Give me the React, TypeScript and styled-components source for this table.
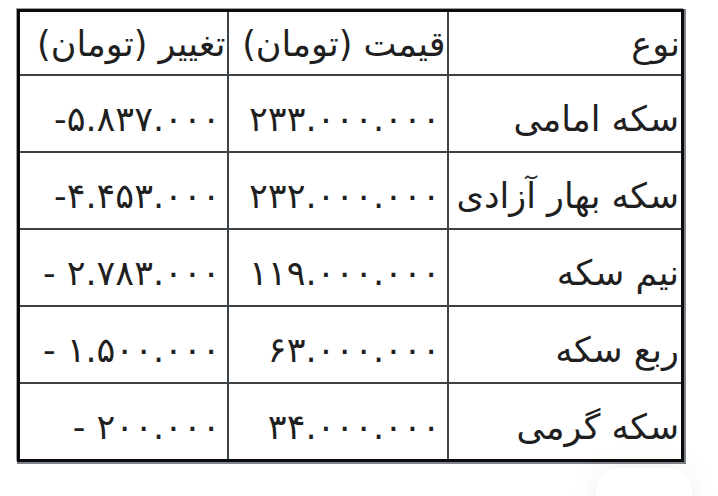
import styled, { createGlobalStyle } from 'styled-components';

const GlobalStyle = createGlobalStyle`
  html, body {
    margin: 0;
    padding: 0;
    background: #ffffff;
  }
  body {
    font-family: "DejaVu Sans", "Noto Sans", sans-serif;
    color: #1f1f1f;
  }
`;

const Page = styled.div`
  position: relative;
  width: 718px;
  height: 496px;
  overflow: hidden;
  padding: 9px 0 0 17px;
  box-sizing: border-box;
`;

const PriceTable = styled.table`
  direction: rtl;
  border-collapse: collapse;
  border: 3px solid #0a0a0a;
  box-shadow: 1px 1px 0 1px #7d838a, -1px -1px 0 0 #9aa0a6;
  width: 664px;
  table-layout: fixed;
`;

const Col = styled.col<{ $w: number }>`
  width: ${(p) => p.$w}px;
`;

const HeadCell = styled.th`
  height: 60px;
  padding: 2px 1px 0 4px;
  border: 2px solid #3d4247;
  font-weight: normal;
  font-size: 35px;
  text-align: right;
  vertical-align: middle;
  white-space: nowrap;
  overflow: hidden;
`;

const Cell = styled.td`
  height: 65px;
  padding: 10px 2px 0 4px;
  border: 2px solid #3d4247;
  font-size: 35px;
  text-align: right;
  vertical-align: middle;
  white-space: nowrap;
  overflow: hidden;
`;

const NumberCell = styled(Cell)`
  padding-right: 6px;
`;

const Num = styled.span`
  direction: ltr;
  unicode-bidi: isolate;
  display: inline-block;
`;

const FloatingCard = styled.div`
  position: absolute;
  right: 26px;
  bottom: -44px;
  width: 96px;
  height: 72px;
  border-radius: 24px;
  background: #ffffff;
  box-shadow: 0 0 30px rgba(0, 0, 0, 0.07);
`;

const rows = [
  { name: 'سکه امامی', price: '۲۳۳.۰۰۰.۰۰۰', change: '-۵.۸۳۷.۰۰۰' },
  { name: 'سکه بهار آزادی', price: '۲۳۲.۰۰۰.۰۰۰', change: '-۴.۴۵۳.۰۰۰' },
  { name: 'نیم سکه', price: '۱۱۹.۰۰۰.۰۰۰', change: '- ۲.۷۸۳.۰۰۰' },
  { name: 'ربع سکه', price: '۶۳.۰۰۰.۰۰۰', change: '- ۱.۵۰۰.۰۰۰' },
  { name: 'سکه گرمی', price: '۳۴.۰۰۰.۰۰۰', change: '- ۲۰۰.۰۰۰' },
];

const App = () => {
  return (
    <Page>
      <GlobalStyle />
      <PriceTable>
        <colgroup>
          <Col $w={235} />
          <Col $w={220} />
          <Col $w={209} />
        </colgroup>
        <thead>
          <tr>
            <HeadCell>نوع</HeadCell>
            <HeadCell>قیمت (تومان)</HeadCell>
            <HeadCell>تغییر (تومان)</HeadCell>
          </tr>
        </thead>
        <tbody>
          {rows.map((r) => (
            <tr key={r.name}>
              <Cell>{r.name}</Cell>
              <NumberCell>
                <Num>{r.price}</Num>
              </NumberCell>
              <NumberCell>
                <Num>{r.change}</Num>
              </NumberCell>
            </tr>
          ))}
        </tbody>
      </PriceTable>
      <FloatingCard />
    </Page>
  );
};

export default App;
